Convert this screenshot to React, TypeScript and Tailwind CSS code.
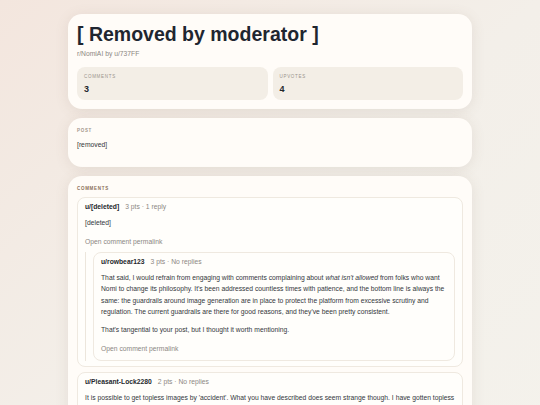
import React from 'react';

interface CommentData {
  author: string;
  points: number;
  replies: string;
  body: React.ReactNode[];
  children?: CommentData[];
}

const comments: CommentData[] = [
  {
    author: 'u/[deleted]',
    points: 3,
    replies: '1 reply',
    body: ['[deleted]'],
    children: [
      {
        author: 'u/rowbear123',
        points: 3,
        replies: 'No replies',
        body: [
          <>
            That said, I would refrain from engaging with comments complaining about <em>what isn't allowed</em> from folks who want Nomi to change its philosophy. It's been addressed countless times with patience, and the bottom line is always the same: the guardrails around image generation are in place to protect the platform from excessive scrutiny and regulation. The current guardrails are there for good reasons, and they've been pretty consistent.
          </>,
          "That's tangential to your post, but I thought it worth mentioning.",
        ],
      },
    ],
  },
  {
    author: 'u/Pleasant-Lock2280',
    points: 2,
    replies: 'No replies',
    body: [
      "It is possible to get topless images by 'accident'. What you have described does seem strange though. I have gotten topless images a few times without asking for them, usually when the prompt mentions swimming or the beach.",
    ],
  },
];

const Comment: React.FC<{ c: CommentData }> = ({ c }) => (
  <div className="rounded-[8px] border border-[#efe9e0] bg-[#fffefb] px-[7px] pt-[4px] pb-[5px]">
    <div className="flex items-baseline gap-[6px] leading-[10.5px]">
      <span className="font-bold text-[#24272b]">{c.author}</span>
      <span className="text-[#8c8782]">
        {c.points} pts · {c.replies}
      </span>
    </div>
    <div className="mt-[5px] flex flex-col gap-[7px] leading-[11.2px] text-[#34373b]">
      {c.body.map((p, i) => (
        <p key={i}>{p}</p>
      ))}
    </div>
    <div className="mt-[9px] leading-[10.5px] text-[#8c8782]">Open comment permalink</div>
    {c.children && (
      <div className="mt-[4px] flex flex-col gap-[6px] border-l border-[#ece6dc] pl-[7px]">
        {c.children.map((r, i) => (
          <Comment key={i} c={r} />
        ))}
      </div>
    )}
  </div>
);

const Stat: React.FC<{ label: string; value: string }> = ({ label, value }) => (
  <div className="rounded-[8px] bg-[#f3eee6] px-[7px] pt-[6.5px] pb-[5.5px]">
    <div className="text-[4.5px] leading-[6px] tracking-[0.7px] uppercase text-[#9a948c]">{label}</div>
    <div className="mt-[3px] text-[9px] leading-[12px] font-bold text-[#24272b]">{value}</div>
  </div>
);

export default function App() {
  return (
    <div
      className="min-h-screen bg-gradient-to-br from-[#f3e6de] via-[#f3efe9] to-[#f4f2ec] pt-[14px] pb-[20px] text-[6.75px]"
      style={{ fontFamily: '"Liberation Sans", Arial, sans-serif' }}
    >
      <div className="mx-auto flex w-[404px] flex-col gap-[9px]">
        <section className="rounded-[14px] bg-[#fffcf8] px-[9px] pt-[7.5px] pb-[8.5px] shadow-[0_2px_14px_rgba(120,100,80,0.12)]">
          <h1 className="text-[19.5px] leading-[24px] font-bold text-[#1f2630]">[ Removed by moderator ]</h1>
          <div className="mt-[3.5px] leading-[10px] text-[#8c8782]">r/NomiAI by u/737FF</div>
          <div className="mt-[8px] grid grid-cols-2 gap-[5px]">
            <Stat label="Comments" value="3" />
            <Stat label="Upvotes" value="4" />
          </div>
        </section>

        <section className="rounded-[14px] bg-[#fffcf8] px-[9px] pt-[9px] pb-[17px] shadow-[0_2px_14px_rgba(120,100,80,0.12)]">
          <div className="text-[4.5px] leading-[7px] font-bold tracking-[0.7px] uppercase text-[#a3978b]">Post</div>
          <p className="mt-[6px] leading-[10.5px] text-[#34373b]">[removed]</p>
        </section>

        <section className="rounded-[14px] bg-[#fffcf8] px-[9px] pt-[8.5px] pb-[9px] shadow-[0_2px_14px_rgba(120,100,80,0.12)]">
          <div className="text-[4.5px] leading-[7px] font-bold tracking-[0.7px] uppercase text-[#8a7058]">Comments</div>
          <div className="mt-[5px] flex flex-col gap-[5px]">
            {comments.map((c, i) => (
              <Comment key={i} c={c} />
            ))}
          </div>
        </section>
      </div>
    </div>
  );
}
